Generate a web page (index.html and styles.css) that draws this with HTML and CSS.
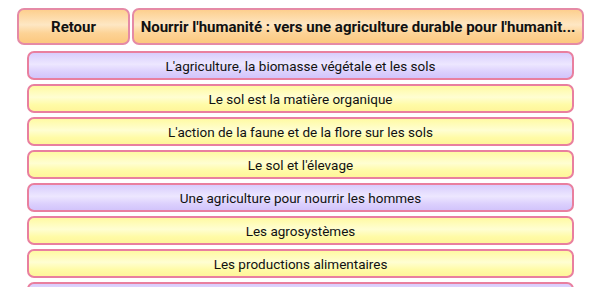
FILE: index.html
```html
<!DOCTYPE html>
<html lang="fr">
<head>
<meta charset="utf-8">
<link rel="stylesheet" href="styles.css">
</head>
<body>
<div class="page">
  <div class="header">
    <div class="btn back">Retour</div>
    <div class="btn title">Nourrir l'humanité : vers une agriculture durable pour l'humanit...</div>
  </div>
  <div class="list">
    <div class="row purple">L'agriculture, la biomasse végétale et les sols</div>
    <div class="row yellow">Le sol est la matière organique</div>
    <div class="row yellow">L'action de la faune et de la flore sur les sols</div>
    <div class="row yellow">Le sol et l'élevage</div>
    <div class="row purple">Une agriculture pour nourrir les hommes</div>
    <div class="row yellow">Les agrosystèmes</div>
    <div class="row yellow">Les productions alimentaires</div>
    <div class="row purple"></div>
  </div>
</div>
</body>
</html>
```
FILE: styles.css
```css
html, body {
  margin: 0;
  padding: 0;
  background: #ffffff;
}
body {
  font-family: Roboto, "Liberation Sans", sans-serif;
  color: #111;
}
.page {
  width: 600px;
  height: 300px;
  overflow: hidden;
}
.header {
  display: flex;
  gap: 2px;
  padding: 8px 16px 0 17px;
}
.btn {
  box-sizing: border-box;
  height: 37px;
  border: 2px solid #e58aa6;
  border-radius: 7px;
  background: linear-gradient(to bottom, #fdcf8e 0%, #fee7c4 45%, #fdd396 70%, #fcc87f 100%);
  font-weight: bold;
  font-size: 15px;
  display: flex;
  align-items: center;
  justify-content: center;
  white-space: nowrap;
  overflow: hidden;
}
.back {
  width: 113px;
  flex: none;
}
.title {
  flex: 1;
}
.list {
  display: flex;
  flex-direction: column;
  gap: 4px;
  margin: 6px 26px 0 27px;
  height: 236px;
  overflow: hidden;
}
.row {
  box-sizing: border-box;
  flex: none;
  height: 29px;
  border: 2px solid #e97f9f;
  border-radius: 7px;
  font-size: 13.5px;
  display: flex;
  align-items: center;
  justify-content: center;
  white-space: nowrap;
}
.purple {
  background: linear-gradient(to bottom, #d8cdfd 0%, #ede7ff 45%, #dcd0fd 75%, #d2c4fb 100%);
}
.yellow {
  background: linear-gradient(to bottom, #fffaa3 0%, #fffed2 45%, #fffba6 75%, #fff59a 100%);
}
```
